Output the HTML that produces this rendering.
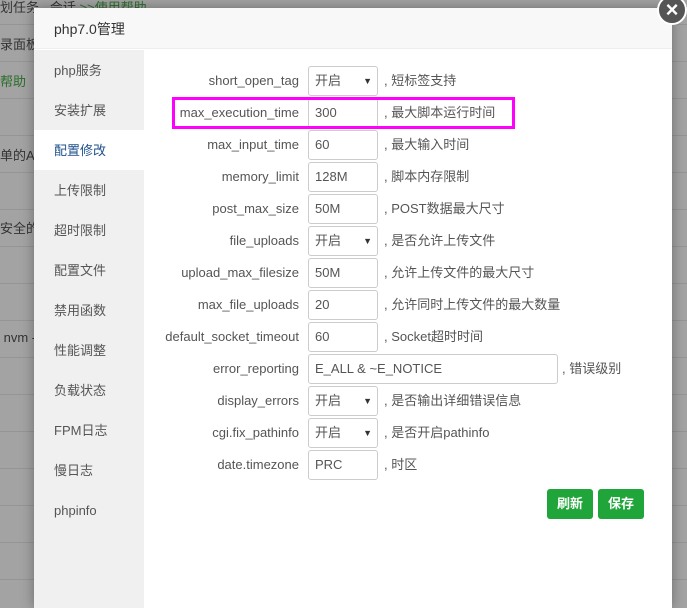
<!DOCTYPE html><html><head><meta charset="utf-8"><style>
*{box-sizing:border-box;margin:0;padding:0}
body{width:687px;height:605px;overflow:hidden;position:relative;background:#a3a3a3;font-family:"Liberation Sans","Noto Sans CJK SC",sans-serif;font-size:13px;color:#555}
.bgl{position:absolute;left:0;width:687px;height:1px;background:#959595}
.bgt{position:absolute;left:0;font-size:13px;color:#333}
.dlg{position:absolute;left:34px;top:8px;width:638px;height:600px;background:#fff;box-shadow:0 0 12px rgba(0,0,0,.35)}
.hd{height:41px;background:#f8f8f8;border-bottom:1px solid #eee;padding-left:20px;line-height:43px;font-size:14px;color:#333}
.side{position:absolute;left:0;top:42px;width:110px;bottom:0;background:#f0f0f0}
.side div{height:40px;line-height:41px;padding-left:20px;font-size:13px;color:#555}
.side .on{background:#fff;color:#20518b}
.row{position:absolute;left:110px;height:30px;width:500px}
.lb{position:absolute;right:345px;top:1px;line-height:30px;color:#555;white-space:nowrap}
.in{position:absolute;left:164px;top:1px;width:70px;height:30px;border:1px solid #ccc;border-radius:3px;line-height:28px;padding-left:6px;color:#555}
.in.s::after{content:"▼";position:absolute;right:5px;top:0;font-size:9px;color:#333}
.ds{position:absolute;left:240px;top:1px;line-height:30px;color:#555;white-space:nowrap}
.btn{position:absolute;top:481px;width:46px;height:30px;background:#20a53a;color:#fff;border-radius:3px;text-align:center;line-height:30px;font-weight:bold}
</style></head><body>
<div class="bgl" style="top:24px"></div><div class="bgl" style="top:61px"></div><div class="bgl" style="top:98px"></div><div class="bgl" style="top:135px"></div><div class="bgl" style="top:172px"></div><div class="bgl" style="top:209px"></div><div class="bgl" style="top:246px"></div><div class="bgl" style="top:283px"></div><div class="bgl" style="top:320px"></div><div class="bgl" style="top:357px"></div><div class="bgl" style="top:394px"></div><div class="bgl" style="top:431px"></div><div class="bgl" style="top:468px"></div><div class="bgl" style="top:505px"></div><div class="bgl" style="top:542px"></div><div class="bgl" style="top:579px"></div>
<div class="bgt" style="top:-3px">划任务 &nbsp; 会话 <span style="color:#2a6e2a">&gt;&gt;使用帮助</span></div>
<div class="bgt" style="top:34px">录面板</div>
<div class="bgt" style="top:71px;color:#2a6e2a">帮助</div>
<div class="bgt" style="top:145px">单的A</div>
<div class="bgt" style="top:218px">安全的</div>
<div class="bgt" style="top:330px">&nbsp;nvm -</div>
<div class="dlg">
<div class="hd">php7.0管理</div>
<div class="side"><div>php服务</div><div>安装扩展</div><div class="on">配置修改</div><div>上传限制</div><div>超时限制</div><div>配置文件</div><div>禁用函数</div><div>性能调整</div><div>负载状态</div><div>FPM日志</div><div>慢日志</div><div>phpinfo</div></div>
<div class="row" style="top:57px"><span class="lb">short_open_tag</span><div class="in s">开启</div><span class="ds">, 短标签支持</span></div>
<div class="row" style="top:89px"><span class="lb">max_execution_time</span><div class="in">300</div><span class="ds">, 最大脚本运行时间</span></div>
<div class="row" style="top:121px"><span class="lb">max_input_time</span><div class="in">60</div><span class="ds">, 最大输入时间</span></div>
<div class="row" style="top:153px"><span class="lb">memory_limit</span><div class="in">128M</div><span class="ds">, 脚本内存限制</span></div>
<div class="row" style="top:185px"><span class="lb">post_max_size</span><div class="in">50M</div><span class="ds">, POST数据最大尺寸</span></div>
<div class="row" style="top:217px"><span class="lb">file_uploads</span><div class="in s">开启</div><span class="ds">, 是否允许上传文件</span></div>
<div class="row" style="top:249px"><span class="lb">upload_max_filesize</span><div class="in">50M</div><span class="ds">, 允许上传文件的最大尺寸</span></div>
<div class="row" style="top:281px"><span class="lb">max_file_uploads</span><div class="in">20</div><span class="ds">, 允许同时上传文件的最大数量</span></div>
<div class="row" style="top:313px"><span class="lb">default_socket_timeout</span><div class="in">60</div><span class="ds">, Socket超时时间</span></div>
<div class="row" style="top:345px"><span class="lb">error_reporting</span><div class="in" style="width:250px">E_ALL &amp; ~E_NOTICE</div><span class="ds" style="left:418px">, 错误级别</span></div>
<div class="row" style="top:377px"><span class="lb">display_errors</span><div class="in s">开启</div><span class="ds">, 是否输出详细错误信息</span></div>
<div class="row" style="top:409px"><span class="lb">cgi.fix_pathinfo</span><div class="in s">开启</div><span class="ds">, 是否开启pathinfo</span></div>
<div class="row" style="top:441px"><span class="lb">date.timezone</span><div class="in">PRC</div><span class="ds">, 时区</span></div>
<div class="btn" style="left:513px">刷新</div><div class="btn" style="left:564px">保存</div>
<div style="position:absolute;left:138px;top:89px;width:343px;height:32px;border:3px solid #f0f"></div>
</div>
<div style="position:absolute;left:657px;top:-5px;width:30px;height:30px;border-radius:50%;background:#555;border:2px solid #fff;color:#fff;text-align:center;line-height:25px;font-size:22px;font-weight:bold">×</div>
</body></html>
